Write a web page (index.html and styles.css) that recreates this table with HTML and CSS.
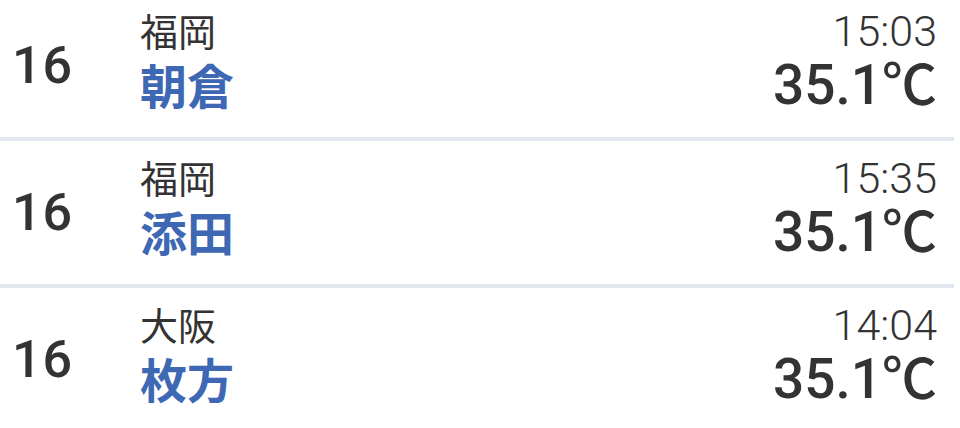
FILE: index.html
```html
<!DOCTYPE html>
<html lang="ja">
<head>
    <meta charset="UTF-8">
    <meta name="viewport" content="width=device-width, initial-scale=1.0">
    <title>最高気温ランキング</title>
    <link rel="stylesheet" href="styles.css">
</head>
<body>

<ul class="ranking">
    <li class="rank-row">
        <span class="rank">16</span>
        <div class="place">
            <span class="pref">福岡</span>
            <span class="city">朝倉</span>
        </div>
        <div class="reading">
            <span class="time">15:03</span>
            <span class="temp">35.1℃</span>
        </div>
    </li>
    <li class="rank-row">
        <span class="rank">16</span>
        <div class="place">
            <span class="pref">福岡</span>
            <span class="city">添田</span>
        </div>
        <div class="reading">
            <span class="time">15:35</span>
            <span class="temp">35.1℃</span>
        </div>
    </li>
    <li class="rank-row">
        <span class="rank">16</span>
        <div class="place">
            <span class="pref">大阪</span>
            <span class="city">枚方</span>
        </div>
        <div class="reading">
            <span class="time">14:04</span>
            <span class="temp">35.1℃</span>
        </div>
    </li>
</ul>

</body>
</html>
```

FILE: styles.css
```css
/* Page */
body {
    margin: 0;
    background: #fff;
    color: #333;
    font-family: Roboto, "Noto Sans CJK JP", sans-serif;
    overflow: hidden;
}

/* Ranking list (scrolled slightly, so the first row starts above the top) */
.ranking {
    list-style: none;
    margin: -6px 6px 0 0;
    padding: 0;
}

.rank-row {
    display: flex;
    align-items: center;
    height: 143px;
    border-bottom: 4px solid #e1e6ef;
}

.rank {
    width: 140px;
    padding-left: 12px;
    box-sizing: border-box;
    font-size: 52px;
    font-weight: 500;
    letter-spacing: 1px;
}

/* Prefecture and city */
.place {
    display: flex;
    flex-direction: column;
    margin-top: -14px;
    font-family: "Noto Sans CJK JP", sans-serif;
}

.pref {
    font-size: 38px;
    line-height: 50px;
    color: #333;
}

.city {
    font-size: 47px;
    line-height: 58px;
    font-weight: 700;
    color: #3e68b3;
}

/* Time and temperature */
.reading {
    margin-left: auto;
    padding-right: 17px;
    display: flex;
    flex-direction: column;
    align-items: flex-end;
    margin-top: -10px;
}

.time {
    font-size: 43px;
    line-height: 48px;
    font-weight: 300;
}

.temp {
    font-size: 55px;
    line-height: 60px;
    font-weight: 500;
}
```
